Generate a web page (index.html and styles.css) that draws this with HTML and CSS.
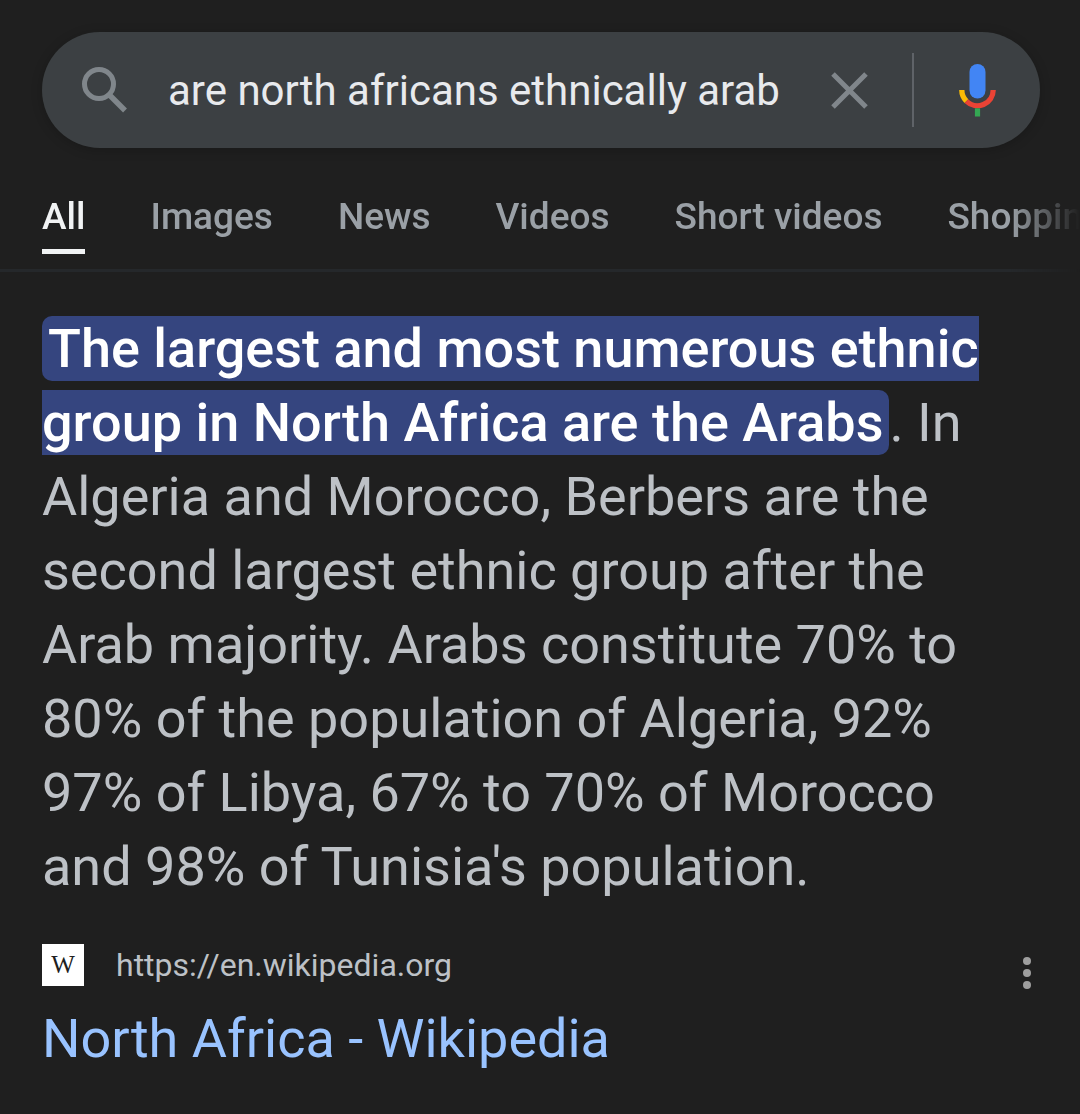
FILE: index.html
```html
<!DOCTYPE html>
<html lang="en">
  <head>
    <meta charset="UTF-8" />
    <meta name="viewport" content="width=device-width, initial-scale=1.0" />
    <title>are north africans ethnically arab</title>
    <link rel="stylesheet" href="styles.css">
  </head>
  <body>
    <header>
      <form class="search-box" role="search">
        <button type="submit" class="icon-btn" aria-label="Search">
          <svg width="48" height="48" viewBox="0 0 48 48" fill="none" stroke="#80868b">
            <circle cx="19" cy="18" r="14.500" stroke-width="5" />
            <path d="M29 28.500L45 44.500" stroke-width="5.500" />
          </svg>
        </button>
        <input type="text" class="search-input" name="q" value="are north africans ethnically arab" aria-label="Search query" />
        <button type="reset" class="icon-btn" aria-label="Clear">
          <svg width="38" height="38" viewBox="0 0 38 38" fill="none" stroke="#80868b" stroke-width="5">
            <path d="M3 3L36 36M36 3L3 36" />
          </svg>
        </button>
        <span class="divider"></span>
        <button type="button" class="icon-btn" aria-label="Search by voice">
          <svg width="38" height="54" viewBox="0 0 38 54" fill="none">
            <rect x="11.500" y="1" width="16" height="34.500" rx="8" fill="#4285f4" />
            <path d="M3.800 27A15.700 15.700 0 0 0 8.400 38.100" stroke="#fbbc04" stroke-width="5.300" />
            <path d="M8.400 38.100A15.700 15.700 0 0 0 35.200 27" stroke="#ea4335" stroke-width="5.300" />
            <rect x="16.900" y="45.300" width="5.200" height="8.200" fill="#34a853" />
          </svg>
        </button>
      </form>

      <nav class="tabs">
        <a href="#" class="tab active">All</a>
        <a href="#" class="tab">Images</a>
        <a href="#" class="tab">News</a>
        <a href="#" class="tab">Videos</a>
        <a href="#" class="tab">Short videos</a>
        <a href="#" class="tab">Shopping</a>
      </nav>
    </header>

    <main>
      <p class="snippet">
        <mark>The largest and most numerous ethnic<br />group in North Africa are the Arabs</mark>. In<br />
        Algeria and Morocco, Berbers are the<br />
        second largest ethnic group after the<br />
        Arab majority. Arabs constitute 70% to<br />
        80% of the population of Algeria, 92%<br />
        97% of Libya, 67% to 70% of Morocco<br />
        and 98% of Tunisia's population.
      </p>

      <div class="source">
        <span class="favicon">W</span>
        <span class="url">https://en.wikipedia.org</span>
        <button type="button" class="icon-btn" aria-label="About this result">
          <svg width="10" height="34" viewBox="0 0 10 34" fill="#9e9e9e">
            <circle cx="5" cy="5" r="4" />
            <circle cx="5" cy="17" r="4" />
            <circle cx="5" cy="29" r="4" />
          </svg>
        </button>
      </div>
      <a href="#" class="result-title">North Africa - Wikipedia</a>
    </main>
  </body>
</html>
```

FILE: styles.css
```css
* {
  margin: 0;
  padding: 0;
  box-sizing: border-box;
}
body {
  font-family: "Google Sans", Roboto, "Liberation Sans", sans-serif;
  background: #1f1f1f;
  color: #bdc1c6;
}
a {
  color: inherit;
  text-decoration: none;
}
.icon-btn {
  display: flex;
  flex: none;
  background: none;
  border: none;
  cursor: pointer;
}

/* search box */
.search-box {
  display: flex;
  align-items: center;
  height: 116px;
  margin: 32px 40px 0 42px;
  padding: 0 44px 0 38px;
  background: #3c4043;
  border-radius: 58px;
  box-shadow: 0 2px 12px rgba(0, 0, 0, 0.2);
}
.search-input {
  flex: 1;
  min-width: 0;
  height: 60px;
  margin-left: 40px;
  background: none;
  border: none;
  outline: none;
  color: #e8eaed;
  font-family: inherit;
  font-size: 42px;
}
.divider {
  flex: none;
  width: 2px;
  height: 74px;
  margin: 0 44px;
  background: #5f6368;
}

/* tabs */
.tabs {
  display: flex;
  gap: 65px;
  height: 124px;
  padding: 46px 0 0 42px;
  overflow: hidden;
  white-space: nowrap;
  border-bottom: 3px solid #25282b;
  -webkit-mask-image: linear-gradient(to left, transparent, #000 70px);
  mask-image: linear-gradient(to left, transparent, #000 70px);
}
.tab {
  flex: none;
  height: 60px;
  color: #9aa0a6;
  font-size: 37px;
  font-weight: 500;
  line-height: 46px;
}
.tab.active {
  color: #f1f3f4;
  border-bottom: 5px solid #f1f3f4;
}

/* result */
main {
  padding: 40px 40px 48px 42px;
}
.snippet {
  font-size: 54px;
  line-height: 74px;
  white-space: nowrap;
}
mark {
  padding: 1px 6px;
  background: #35457f;
  color: #fff;
  font-weight: 500;
  border-radius: 10px;
}
.source {
  display: flex;
  align-items: center;
  margin-top: 36px;
}
.favicon {
  width: 42px;
  height: 42px;
  background: #fff;
  color: #202020;
  font-family: "Liberation Serif", serif;
  font-size: 25px;
  line-height: 42px;
  text-align: center;
}
.url {
  flex: 1;
  margin-left: 32px;
  font-size: 32px;
  line-height: 42px;
}
.source .icon-btn {
  padding: 16px 8px 0;
}
.result-title {
  display: block;
  margin-top: 12px;
  color: #99c3ff;
  font-size: 54px;
  line-height: 74px;
}
```
